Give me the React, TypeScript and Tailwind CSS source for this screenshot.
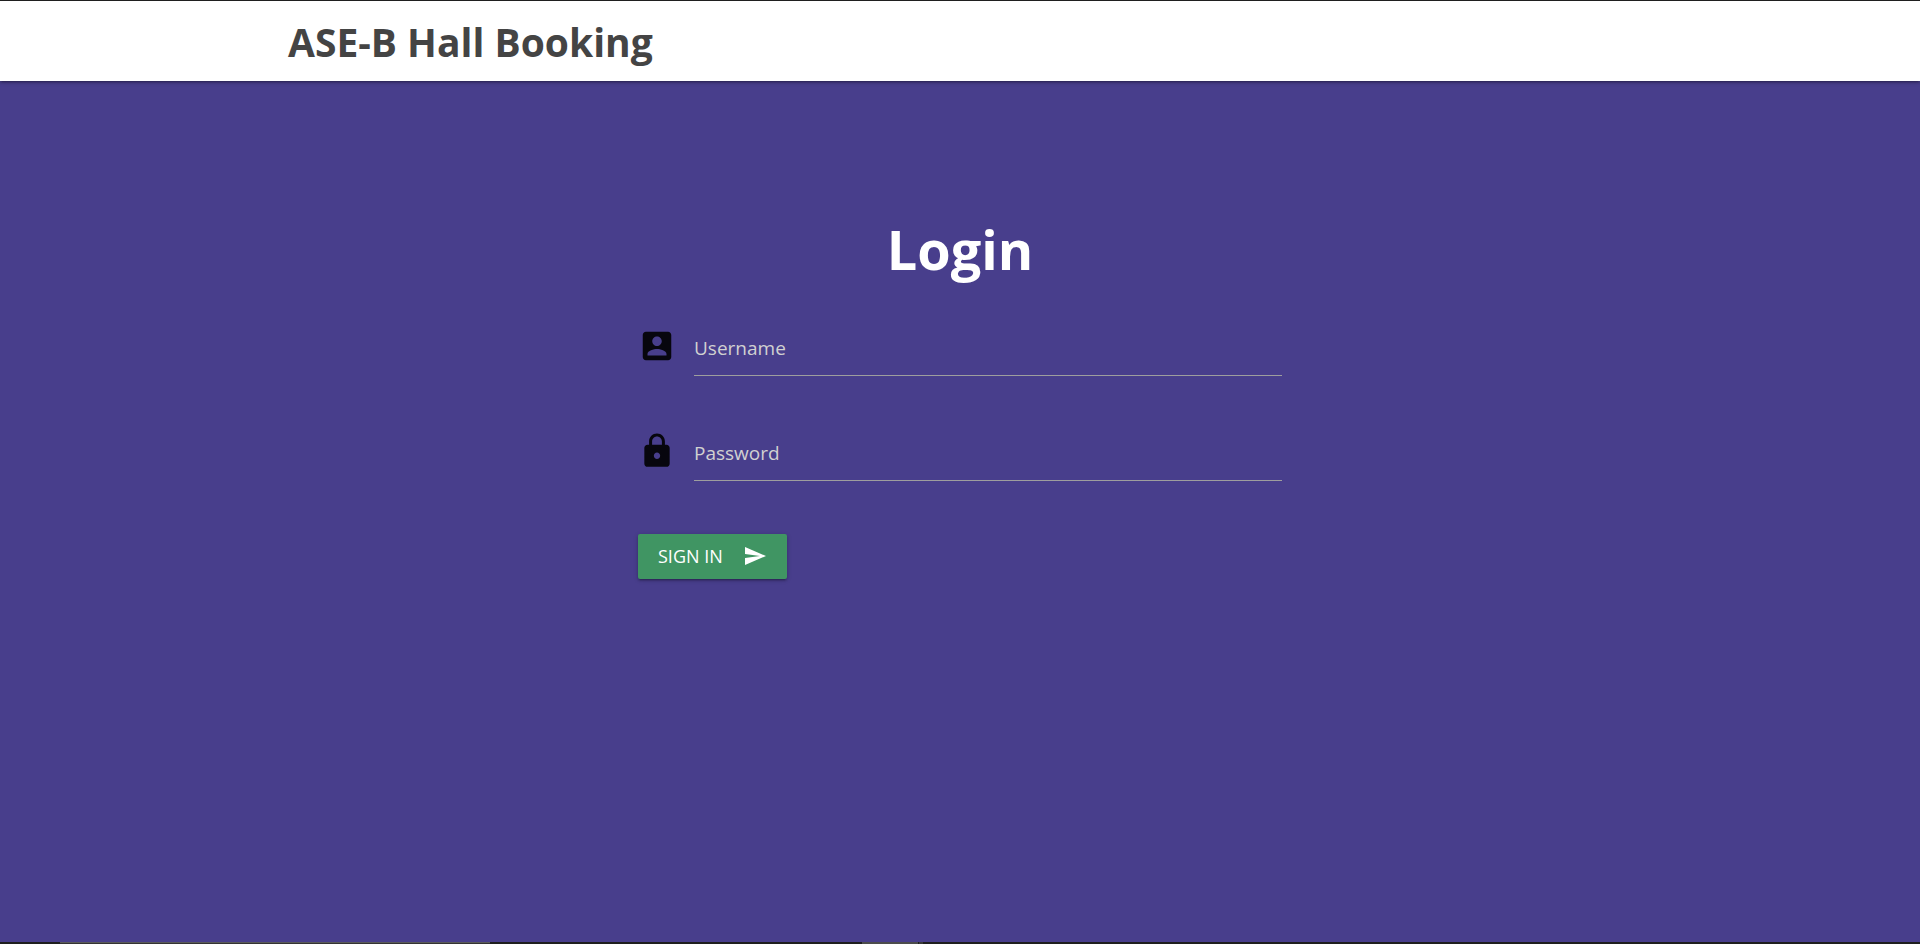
import type { ReactNode } from "react";

type FieldProps = {
  id: string;
  label: string;
  type: string;
  autoComplete: string;
  icon: ReactNode;
};

function Field({ id, label, type, autoComplete, icon }: FieldProps) {
  return (
    <div className="flex h-[49px] items-start">
      <label htmlFor={id} aria-label={label} className="w-14 shrink-0 text-black/90">
        <svg viewBox="0 0 24 24" className="size-[38px] fill-current" aria-hidden="true">
          {icon}
        </svg>
      </label>
      <input
        id={id}
        name={id}
        type={type}
        autoComplete={autoComplete}
        placeholder={label}
        className="h-[49px] min-w-0 flex-1 border-b border-[#9e9e9e] bg-transparent pb-1.5 text-[19px] text-white outline-none placeholder:text-[#d1d1d1] placeholder:opacity-100 focus:border-white"
      />
    </div>
  );
}

export default function App() {
  return (
    <div className="flex min-h-screen flex-col bg-[#483e8c] font-['Open_Sans','Noto_Sans',sans-serif]">
      <header className="border-t border-[#1f1f1f] bg-white shadow-[0_2px_2px_0_rgba(0,0,0,0.14),0_3px_1px_-2px_rgba(0,0,0,0.12),0_1px_5px_0_rgba(0,0,0,0.2)]">
        <nav className="mx-auto flex h-20 w-[70%] items-center">
          <a href="#" className="pt-0.5 text-[39px] leading-[52px] font-bold text-[#444444]">
            ASE-B Hall Booking
          </a>
        </nav>
      </header>

      <main className="mx-auto w-[70%] flex-1">
        <form className="mx-auto w-1/2 px-3.5 pt-[130px]" onSubmit={(e) => e.preventDefault()}>
          <h1 className="text-center text-[54px] leading-[76px] font-bold text-white">Login</h1>
          <div className="mt-10 flex flex-col gap-14">
            <Field
              id="username"
              label="Username"
              type="text"
              autoComplete="username"
              icon={
                <path d="M3 5v14c0 1.1.89 2 2 2h14c1.1 0 2-.9 2-2V5c0-1.1-.9-2-2-2H5c-1.11 0-2 .9-2 2zm12 4c0 1.66-1.34 3-3 3s-3-1.34-3-3 1.34-3 3-3 3 1.34 3 3zm-9 8c0-2 4-3.1 6-3.1s6 1.1 6 3.1v1H6v-1z" />
              }
            />
            <Field
              id="password"
              label="Password"
              type="password"
              autoComplete="current-password"
              icon={
                <path d="M18 8h-1V6c0-2.76-2.24-5-5-5S7 3.24 7 6v2H6c-1.1 0-2 .9-2 2v10c0 1.1.9 2 2 2h12c1.1 0 2-.9 2-2V10c0-1.1-.9-2-2-2zm-6 9c-1.1 0-2-.9-2-2s.9-2 2-2 2 .9 2 2-.9 2-2 2zm3.1-9H8.9V6c0-1.71 1.39-3.1 3.1-3.1 1.71 0 3.1 1.39 3.1 3.1v2z" />
              }
            />
          </div>
          <button
            type="submit"
            className="mt-[53px] flex h-[45px] items-center gap-5 rounded-xs bg-[#409563] px-5 text-[18px] text-white uppercase shadow-[0_2px_2px_0_rgba(0,0,0,0.14),0_3px_1px_-2px_rgba(0,0,0,0.12),0_1px_5px_0_rgba(0,0,0,0.2)]"
          >
            Sign in
            <svg viewBox="0 0 24 24" className="mb-0.5 size-6 fill-current" aria-hidden="true">
              <path d="M2.01 21L23 12 2.01 3 2 10l15 2-15 2z" />
            </svg>
          </button>
        </form>
      </main>

      <footer className="flex h-0.5 bg-[#1f1f1f]">
        <div className="ml-[60px] w-[430px] border-t border-[#5a5a5a] bg-[#333333]" />
        <div className="ml-[372px] w-14 bg-[#4c4c4c]" />
        <div className="ml-px w-1 bg-[#3a3a3a]" />
      </footer>
    </div>
  );
}
